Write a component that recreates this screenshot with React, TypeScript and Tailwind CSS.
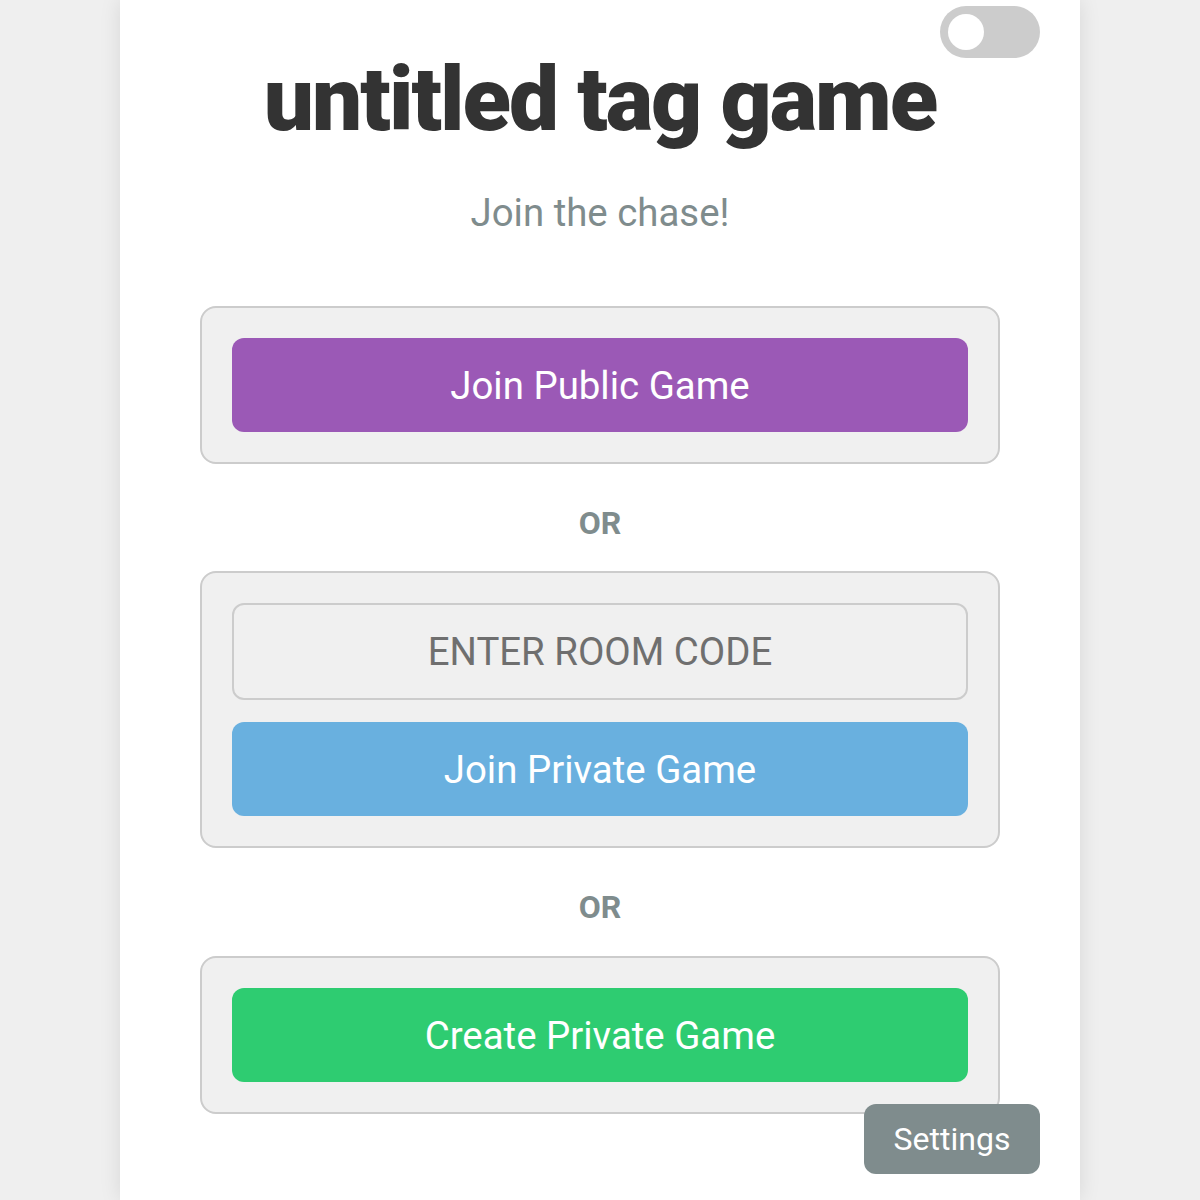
import React from "react";

export default function App() {
  return (
    <div className="min-h-screen bg-[#efefef]" style={{ fontFamily: "Roboto, 'Noto Sans', sans-serif" }}>
      <div className="relative mx-auto w-[960px] min-h-[1200px] bg-white shadow-[0_0_20px_rgba(0,0,0,0.1)] flex flex-col items-center pt-[55px]">
        <div className="absolute right-[40px] top-[6px] w-[100px] h-[52px] rounded-full bg-[#cccccc] flex items-center px-[8px]">
          <div className="w-[36px] h-[36px] rounded-full bg-white" />
        </div>
        <h1 className="text-[89px] leading-none font-black text-[#333333] tracking-[-2px]">untitled tag game</h1>
        <p className="mt-[50px] text-[38.4px] leading-none text-[#7f8c8d]">Join the chase!</p>

        <div className="mt-[74px] w-[800px] flex flex-col">
          <div className="rounded-[16px] border-2 border-[#cccccc] bg-[#f0f0f0] p-[30px]">
            <button className="w-full h-[94px] rounded-[12px] bg-[#9b59b6] text-white text-[38.4px]">Join Public Game</button>
          </div>

          <div className="h-[107px] flex items-center justify-center pt-[10px]">
            <span className="text-[32px] leading-none font-bold text-[#7f8c8d]">OR</span>
          </div>

          <div className="rounded-[16px] border-2 border-[#cccccc] bg-[#f0f0f0] p-[30px] flex flex-col gap-[22px]">
            <div className="w-full h-[97px] rounded-[12px] border-2 border-[#cccccc] bg-[#f0f0f0] flex items-center justify-center text-[38.4px] text-[#6f6f6f]">
              ENTER ROOM CODE
            </div>
            <button className="w-full h-[94px] rounded-[12px] bg-[#69b0df] text-white text-[38.4px]">Join Private Game</button>
          </div>

          <div className="h-[108px] flex items-center justify-center pt-[10px]">
            <span className="text-[32px] leading-none font-bold text-[#7f8c8d]">OR</span>
          </div>

          <div className="rounded-[16px] border-2 border-[#cccccc] bg-[#f0f0f0] p-[30px]">
            <button className="w-full h-[94px] rounded-[12px] bg-[#2ecc71] text-white text-[38.4px]">Create Private Game</button>
          </div>
        </div>

        <button className="absolute right-[40px] top-[1104px] w-[176px] h-[70px] rounded-[12px] bg-[#7f8c8d] text-white text-[32px]">Settings</button>
      </div>
    </div>
  );
}
